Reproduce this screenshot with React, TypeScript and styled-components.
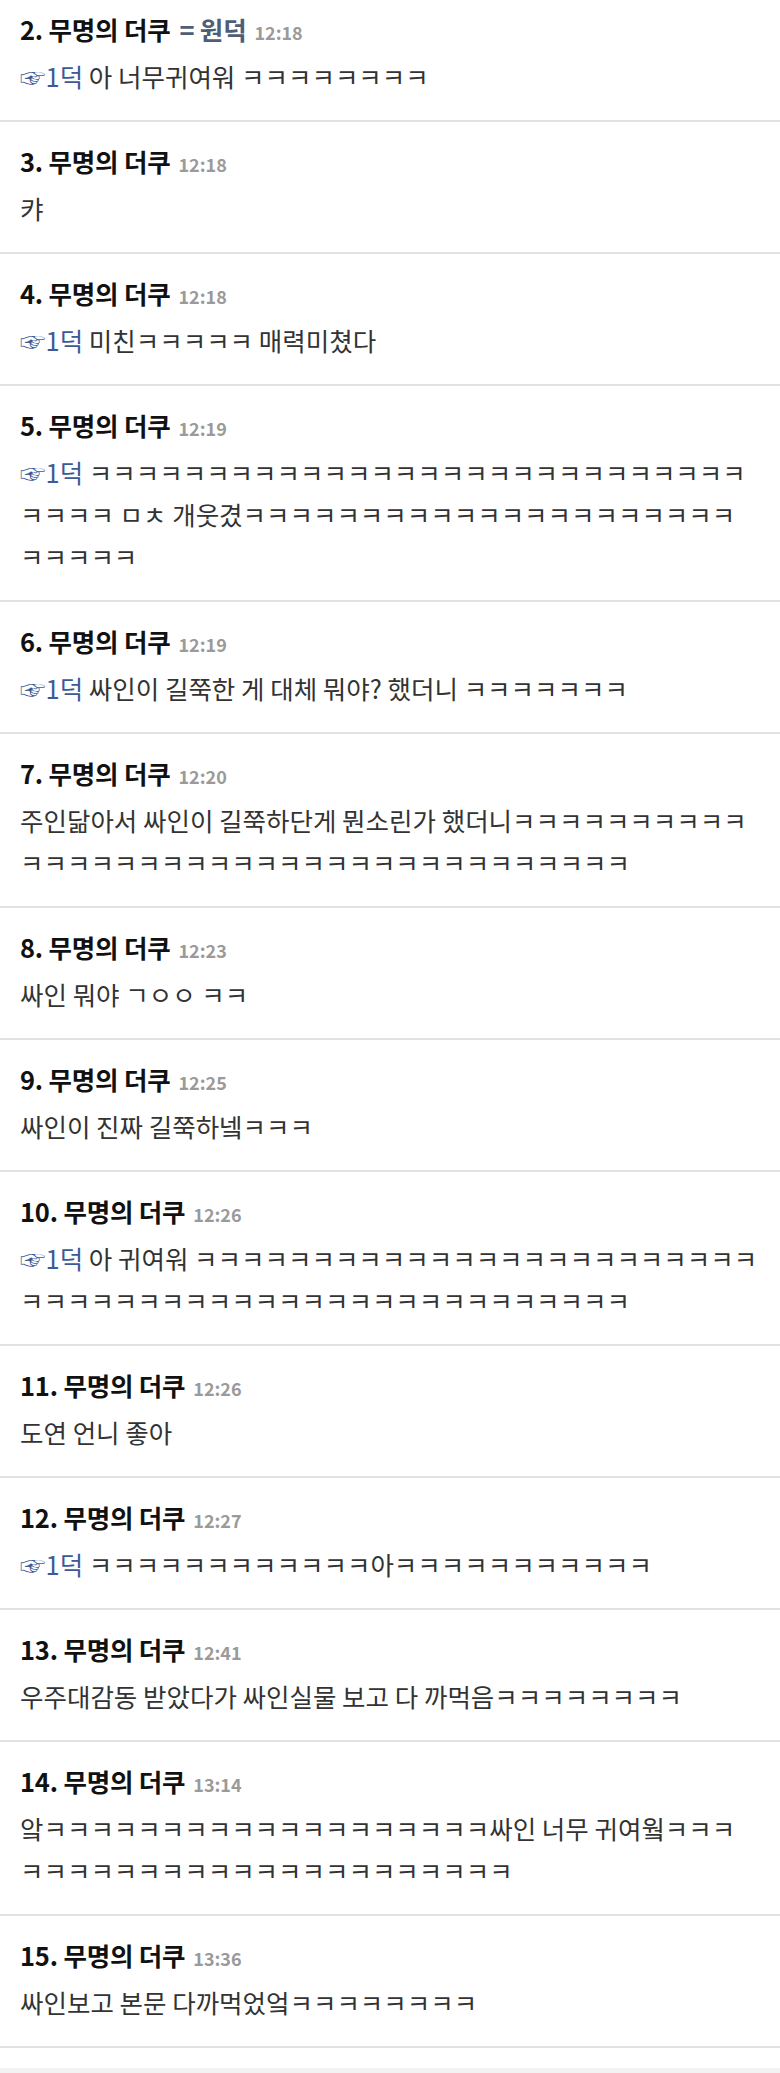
import React from 'react';
import styled, { createGlobalStyle } from 'styled-components';

type Comment = {
  no: number;
  time: string;
  nick?: string;
  reply?: string;
  lines: string[];
};

const K = (n: number) => 'ㅋ'.repeat(n);

const COMMENTS: Comment[] = [
  { no: 2, time: '12:18', nick: '= 원덕', reply: '1덕', lines: [`아 너무귀여워 ${K(8)}`] },
  { no: 3, time: '12:18', lines: ['캬'] },
  { no: 4, time: '12:18', reply: '1덕', lines: [`미친${K(5)} 매력미쳤다`] },
  {
    no: 5,
    time: '12:19',
    reply: '1덕',
    lines: [K(28), `${K(4)} ㅁㅊ 개웃겼${K(21)}`, K(5)],
  },
  { no: 6, time: '12:19', reply: '1덕', lines: [`싸인이 길쭉한 게 대체 뭐야? 했더니 ${K(7)}`] },
  {
    no: 7,
    time: '12:20',
    lines: [`주인닮아서 싸인이 길쭉하단게 뭔소린가 했더니${K(10)}`, K(26)],
  },
  { no: 8, time: '12:23', lines: ['싸인 뭐야 ㄱㅇㅇ ㅋㅋ'] },
  { no: 9, time: '12:25', lines: [`싸인이 진짜 길쭉하넼${K(3)}`] },
  { no: 10, time: '12:26', reply: '1덕', lines: [`아 귀여워 ${K(24)}`, K(26)] },
  { no: 11, time: '12:26', lines: ['도연 언니 좋아'] },
  { no: 12, time: '12:27', reply: '1덕', lines: [`${K(12)}아${K(11)}`] },
  { no: 13, time: '12:41', lines: [`우주대감동 받았다가 싸인실물 보고 다 까먹음${K(8)}`] },
  { no: 14, time: '13:14', lines: [`앜${K(19)}싸인 너무 귀여웤${K(3)}`, K(21)] },
  { no: 15, time: '13:36', lines: [`싸인보고 본문 다까먹었엌${K(8)}`] },
];

const App: React.FC = () => {
  return (
    <Page>
      <GlobalStyle />
      <List>
        {COMMENTS.map(c => (
          <Item key={c.no}>
            <Header>
              <Name>
                {c.no}. 무명의 더쿠
                {c.nick && <Nick>{c.nick}</Nick>}
              </Name>
              <Time>{c.time}</Time>
            </Header>
            <Body>
              {c.lines.map((line, i) => (
                <React.Fragment key={i}>
                  {i === 0 && c.reply && <Reply>☞{c.reply}</Reply>}
                  {i === 0 && c.reply && ' '}
                  {line}
                  {i < c.lines.length - 1 && <br />}
                </React.Fragment>
              ))}
            </Body>
          </Item>
        ))}
      </List>
      <Footer />
    </Page>
  );
};

export default App;

const GlobalStyle = createGlobalStyle`
  html, body {
    margin: 0;
    padding: 0;
    background: #fff;
  }
  body {
    font-family: "Noto Sans CJK KR", "Noto Sans", sans-serif;
    color: #333;
  }
`;

const Page = styled.div`
  width: 780px;
  overflow: hidden;
`;

const List = styled.ul`
  list-style: none;
  margin: -10px 0 0;
  padding: 0;
`;

const Item = styled.li`
  padding: 23px 18px 23px 20px;
  border-bottom: 2px solid #e1e1e1;
`;

const Header = styled.div`
  display: flex;
  align-items: baseline;
  gap: 8px;
  height: 32px;
  line-height: 32px;
  white-space: nowrap;
`;

const Name = styled.span`
  font-size: 25.5px;
  font-weight: 700;
  color: #111;
  letter-spacing: -0.2px;
`;

const Nick = styled.span`
  margin-left: 9px;
  color: #4e5d78;
`;

const Time = styled.span`
  font-size: 18px;
  font-weight: 700;
  color: #9a9a9a;
`;

const Body = styled.p`
  margin: 10px 0 0;
  font-size: 25.5px;
  line-height: 42px;
  color: #333;
  white-space: nowrap;
`;

const Reply = styled.span`
  color: #3c5a96;
`;

const Footer = styled.div`
  margin-top: 20px;
  height: 200px;
  background: #f2f2f2;
`;
